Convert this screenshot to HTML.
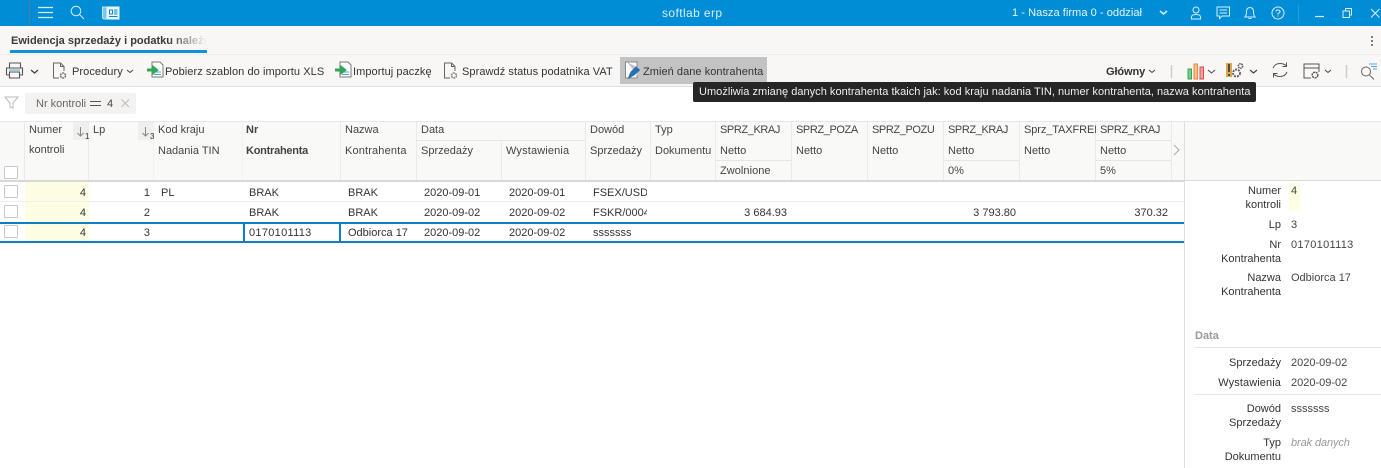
<!DOCTYPE html>
<html><head><meta charset="utf-8"><style>
html,body{margin:0;padding:0;width:1381px;height:468px;overflow:hidden;background:#fff}
body{font-family:"Liberation Sans",sans-serif;font-size:11px;color:#333;position:relative}
.a{position:absolute}
.t{position:absolute;white-space:nowrap;line-height:14px}
.r{text-align:right}
.h{color:#444}
.c{letter-spacing:-.4px}
.tb{letter-spacing:.07px;color:#333}
.v{position:absolute;width:1px;background:#eceae8}
.l{position:absolute;height:1px;background:#e6e5e3}
.cb{position:absolute;left:4px;width:12px;height:11px;border:1px solid #c9c9c9;background:#fff;border-radius:1px}
svg{position:absolute;overflow:visible}
.lab{position:absolute;left:1190px;width:91px;text-align:right;line-height:14px;color:#333}
.val{position:absolute;left:1291px;white-space:nowrap;line-height:14px;color:#444}
</style></head><body>
<!-- top bar -->
<div class="a" style="left:0;top:0;width:1381px;height:26px;background:#018dd5"></div>
<div class="a" style="left:29px;top:0;width:1px;height:26px;background:#4f7f99"></div>
<svg style="left:0;top:0" width="1381" height="26" fill="none" stroke="#d5eefa" stroke-width="1">
<path d="M38 7.5H53M38 12.5H53M38 17.5H53" stroke-width="1.2"/>
<circle cx="76" cy="11" r="4.8"/><path d="M79.5 14.5L84 19"/>
<path d="M102.500 7H119V19H104.500Q102.500 19 102.500 17Z" fill="#7cc4ea" stroke="#bfe4f6"/><path d="M107 7V19H119V7Z" fill="#eaf6fc" stroke="#eaf6fc"/><path d="M109.500 10H112.500V14H109.500ZM114 10H117.500M114 12H117.500M114 14H117.500M109 16.500H117.500" stroke="#018dd5"/>
<circle cx="1196" cy="10" r="3"/><path d="M1191.500 19V17Q1191.500 14.500 1196 14.500T1200.500 17V19Z"/>
<path d="M1217 7H1229.500V16H1222L1219.500 18.500V16H1217ZM1219.500 10H1227M1219.500 13H1227"/>
<path d="M1245 17Q1246.500 15.500 1246.500 12Q1246.500 7.500 1250 7.500T1253.500 12Q1253.500 15.500 1255 17ZM1248.500 18.500H1251.500"/>
<circle cx="1278" cy="13" r="6"/><path d="M1276 11.500Q1276 10 1278 10T1280 11.500Q1280 12.700 1278 13.500V14.500M1278 15.500V16.500"/>
<path d="M1298.500 5V21" stroke="#2a9fdb"/>
<path d="M1315 16.500H1324" stroke-width="1.200"/>
<path d="M1343 11H1349.500V17.500H1343ZM1345.500 11V8.500H1351.500V15H1349.500"/>
<path d="M1371 9L1379.500 17.500M1379.500 9L1371 17.500" stroke-width="1.100"/>
<path d="M1160 11L1163.500 14L1167 11" stroke-width="1.600"/>
</svg>
<div class="t" style="left:662px;top:6px;color:#d8f0fb;font-size:12px;letter-spacing:.4px">softlab erp</div>
<div class="t" style="left:1012px;top:6px;color:#e6f5fc;font-size:11.100px;letter-spacing:.02px">1 - Nasza firma 0 - oddział</div>
<!-- tab bar -->
<div class="a" style="left:0;top:26px;width:1381px;height:28px;background:#f8f7f5;border-bottom:1px solid #eeedeb"></div>
<div class="t" style="left:11px;top:34px;font-weight:bold;color:#3a3a3a;font-size:11px;width:196px;overflow:hidden;-webkit-mask-image:linear-gradient(90deg,#000 80%,transparent 100%)">Ewidencja sprzedaży i podatku należnego</div>
<div class="a" style="left:10px;top:50px;width:197px;height:3px;background:#0f93d8"></div>
<svg style="left:1370px;top:35px" width="4" height="12"><circle cx="2" cy="2" r="1" fill="#555"/><circle cx="2" cy="6" r="1" fill="#555"/><circle cx="2" cy="10" r="1" fill="#555"/></svg>
<!-- toolbar -->
<div class="a" style="left:0;top:55px;width:1381px;height:31px;background:#f8f7f5;border-bottom:1px solid #dfdedc"></div>
<div class="a" style="left:620px;top:57px;width:147px;height:27px;background:#c3c3c3"></div>
<svg style="left:0;top:55px" width="1381" height="31" fill="none" stroke="#555" stroke-width="1">
<path d="M9.500 13V8H20.500V13M6.500 20V13H22.500V20H19.500M9.500 20H6.500M9.500 17H19.500V23H9.500Z" stroke="#555" stroke-width="1.100"/><path d="M9 15H20" stroke="#4aa3d8"/>
<path d="M31 15L34.500 18L38 15" stroke="#444" stroke-width="1.300"/>
<path d="M59 23H53.500V8H60.500L64 11.500V16M60.500 8V11.500H64" stroke="#666"/><circle cx="63" cy="20.500" r="2.500" stroke="#777" stroke-width="1.500" stroke-dasharray="2 .6"/>
<path d="M127 15L130 17.500L133 15" stroke="#444"/>
<path d="M152 7H160L163 10V22H152Z" fill="#fff" stroke="#777"/><path d="M154 17H161M154 19.500H161" stroke="#4aa3d8"/><path d="M147 15H154" stroke="#2fa855" stroke-width="3"/><path d="M153 11L158 15L153 19Z" fill="#2fa855" stroke="#2fa855"/>
<path d="M340 7H348L351 10V22H340Z" fill="#fff" stroke="#777"/><path d="M342 17H349M342 19.500H349" stroke="#4aa3d8"/><path d="M335 15H342" stroke="#2fa855" stroke-width="3"/><path d="M341 11L346 15L341 19Z" fill="#2fa855" stroke="#2fa855"/>
<path d="M450 23H444.500V8H451.500L455 11.500V16M451.500 8V11.500H455" stroke="#666"/><circle cx="454" cy="20.500" r="2.500" stroke="#888" stroke-width="1.500" stroke-dasharray="2 .6"/>
<path d="M627 7H637V12M637 20V23H625.500V7H627" fill="#fff" stroke="#888"/><path d="M628.500 23L631 17L636 12L639.500 15L634 20Z" fill="#2a6fb5" stroke="#2a6fb5"/>
<path d="M1149 15L1152 17.500L1155 15" stroke="#444"/>
<path d="M1171.500 10V23" stroke="#ccc" stroke-width="1.500"/>
<rect x="1188" y="14" width="3.500" height="10" fill="#7fc79a" stroke="#2fa855"/><rect x="1194" y="9" width="3.500" height="15" fill="#f5c08e" stroke="#e8873a"/><rect x="1200" y="12" width="3.500" height="12" fill="#f2a5a5" stroke="#e04848"/>
<path d="M1208 15L1211.500 18L1215 15" stroke="#444"/>
<rect x="1226" y="8" width="6" height="14" fill="#d9a84e" stroke="none"/><path d="M1229 9V17M1229 19V21" stroke="#333" stroke-width="1.600"/>
<circle cx="1236.500" cy="18" r="3.500" stroke="#666" stroke-width="2" stroke-dasharray="2 1"/><circle cx="1240.500" cy="11" r="2.200" stroke="#555" stroke-width="1.500" stroke-dasharray="1.500 .7"/>
<path d="M1250 15L1253.500 18L1257 15" stroke="#444" stroke-width="1.200"/>
<path d="M1273 13Q1275 8.500 1280 8.500Q1284 8.500 1286.500 11M1286.500 7.500V11.500H1282.500M1287 17Q1285 21.500 1280 21.500Q1276 21.500 1273.500 19M1273.500 22.500V18.500H1277.500" stroke="#555"/>
<path d="M1311 23H1304V9H1319V17M1304 13H1319" stroke="#555"/><circle cx="1315" cy="20" r="2.800" stroke="#555" stroke-width="1.500" stroke-dasharray="2 .7"/>
<path d="M1325 15L1328 17.500L1331 15" stroke="#444"/>
<path d="M1346.500 10V23" stroke="#ccc" stroke-width="1.500"/>
<circle cx="1366" cy="16.500" r="4.500" stroke="#666"/><path d="M1369.500 20L1374 24.500" stroke="#666"/>
<path d="M1369 9H1377M1371 11.500H1377M1373 14H1377" stroke="#55a8e0"/>
</svg>
<div class="t tb" style="left:72px;top:65px">Procedury</div>
<div class="t tb" style="left:165px;top:65px">Pobierz szablon do importu XLS</div>
<div class="t tb" style="left:353px;top:65px">Importuj paczkę</div>
<div class="t tb" style="left:462px;top:65px">Sprawdź status podatnika VAT</div>
<div class="t tb" style="left:643px;top:65px;letter-spacing:.05px">Zmień dane kontrahenta</div>
<div class="t" style="left:1106px;top:65px;font-weight:bold;color:#333;letter-spacing:-.1px">Główny</div>
<!-- filter -->
<svg style="left:4px;top:96px" width="14" height="13" fill="none" stroke="#bbb"><path d="M1 1H14L9 7V12L6 11V7Z"/></svg>
<div class="a" style="left:25px;top:93px;width:111px;height:21px;background:#f3f2f0;border-radius:2px"></div>
<div class="t" style="left:36px;top:97px;color:#666">Nr kontroli</div>
<div class="a" style="left:90px;top:101px;width:11px;height:5px;border-top:1.500px solid #555;border-bottom:1.500px solid #555;box-sizing:border-box"></div>
<div class="t" style="left:107px;top:97px;font-weight:normal;color:#444">4</div>
<svg style="left:121px;top:99px" width="9" height="9" fill="none" stroke="#bbb"><path d="M.5.5L8 8M8 .5L.5 8"/></svg>
<!-- table header -->
<div class="a" style="left:0;top:121px;width:1381px;height:1px;background:#e8e7e5"></div>
<div class="a" style="left:0;top:122px;width:1381px;height:58px;background:#f9f9f7"></div>
<div class="a" style="left:0;top:180px;width:1184px;height:2px;background:#d9d8d6"></div>
<div class="a" style="left:1184px;top:180px;width:197px;height:1px;background:#d9d8d6"></div>
<div class="a" style="left:73px;top:122px;width:15px;height:18px;background:#f0efed"></div>
<div class="a" style="left:138px;top:122px;width:15px;height:18px;background:#f0efed"></div>
<div class="v" style="left:24px;top:122px;height:58px"></div>
<div class="v" style="left:88px;top:122px;height:58px"></div>
<div class="v" style="left:153px;top:122px;height:58px;background:#f3f2f0"></div>
<div class="v" style="left:242px;top:122px;height:58px;background:#f3f2f0"></div>
<div class="v" style="left:340px;top:122px;height:58px"></div>
<div class="v" style="left:416px;top:122px;height:58px"></div>
<div class="v" style="left:501px;top:140px;height:40px"></div>
<div class="v" style="left:585px;top:122px;height:58px"></div>
<div class="v" style="left:650px;top:122px;height:58px"></div>
<div class="v" style="left:715px;top:122px;height:58px"></div>
<div class="v" style="left:791px;top:122px;height:58px"></div>
<div class="v" style="left:867px;top:122px;height:58px"></div>
<div class="v" style="left:943px;top:122px;height:58px"></div>
<div class="v" style="left:1019px;top:122px;height:58px"></div>
<div class="v" style="left:1095px;top:122px;height:58px"></div>
<div class="v" style="left:1171px;top:122px;height:58px"></div>
<div class="v" style="left:1184px;top:122px;height:346px;background:#e0dfdd"></div>
<div class="l" style="left:416px;top:140px;width:169px"></div>
<div class="l" style="left:715px;top:160px;width:76px"></div>
<div class="l" style="left:943px;top:160px;width:76px"></div>
<div class="l" style="left:1095px;top:160px;width:76px"></div>
<div class="l" style="left:1095px;top:140px;width:76px"></div>
<svg style="left:0;top:122px" width="1190" height="40" fill="none" stroke="#888"><path d="M80.500 5V14M77.500 11L80.500 14L83.500 11M145.500 5V14M142.500 11L145.500 14L148.500 11"/><path d="M1174 23L1179 28L1174 33" stroke="#aaa"/></svg>
<div class="t" style="left:85px;top:132px;font-size:8px;line-height:10px">1</div>
<div class="t" style="left:150px;top:132px;font-size:8px;line-height:10px">3</div>
<div class="cb" style="top:166px"></div>
<div class="t h" style="left:29px;top:123px">Numer</div><div class="t h" style="left:29px;top:143px">kontroli</div>
<div class="t h" style="left:93px;top:123px">Lp</div>
<div class="t h" style="left:158px;top:123px">Kod kraju</div><div class="t h" style="left:158px;top:144px">Nadania TIN</div>
<div class="t h" style="left:246px;top:123px;font-weight:bold;color:#444">Nr</div><div class="t h" style="left:246px;top:144px;font-weight:bold;color:#444;letter-spacing:-.25px">Kontrahenta</div>
<div class="t h" style="left:345px;top:123px">Nazwa</div><div class="t h" style="left:345px;top:144px;letter-spacing:.15px">Kontrahenta</div>
<div class="t h" style="left:421px;top:123px">Data</div><div class="t h" style="left:421px;top:144px">Sprzedaży</div>
<div class="t h" style="left:506px;top:144px;letter-spacing:.15px">Wystawienia</div>
<div class="t h" style="left:590px;top:123px">Dowód</div><div class="t h" style="left:590px;top:144px">Sprzedaży</div>
<div class="t h" style="left:655px;top:123px">Typ</div><div class="t h" style="left:655px;top:144px">Dokumentu</div>
<div class="t h c" style="left:720px;top:123px">SPRZ_KRAJ</div><div class="t h" style="left:720px;top:144px">Netto</div><div class="t h" style="left:720px;top:164px;letter-spacing:.05px">Zwolnione</div>
<div class="t h c" style="left:796px;top:123px">SPRZ_POZA</div><div class="t h" style="left:796px;top:144px">Netto</div>
<div class="t h c" style="left:872px;top:123px">SPRZ_POZU</div><div class="t h" style="left:872px;top:144px">Netto</div>
<div class="t h c" style="left:948px;top:123px">SPRZ_KRAJ</div><div class="t h" style="left:948px;top:144px">Netto</div><div class="t h" style="left:948px;top:164px">0%</div>
<div class="t h c" style="left:1024px;top:123px;width:72px;overflow:hidden;letter-spacing:-.1px">Sprz_TAXFREE</div><div class="t h" style="left:1024px;top:144px">Netto</div>
<div class="t h c" style="left:1100px;top:123px">SPRZ_KRAJ</div><div class="t h" style="left:1100px;top:144px">Netto</div><div class="t h" style="left:1100px;top:164px">5%</div>
<!-- rows -->
<div class="a" style="left:25px;top:182px;width:64px;height:59px;background:#fdfde3"></div>
<div class="l" style="left:0;top:201px;width:1184px;background:#eeeeec"></div>
<div class="a" style="left:0;top:222px;width:1184px;height:2px;background:#0f7fc0"></div>
<div class="a" style="left:0;top:241px;width:1184px;height:2px;background:#0f7fc0"></div>
<div class="a" style="left:243px;top:224px;height:17px;background:#0f7fc0;width:2px"></div>
<div class="a" style="left:339px;top:224px;width:2px;height:17px;background:#0f7fc0"></div>
<div class="cb" style="top:185px"></div><div class="cb" style="top:205px"></div><div class="cb" style="top:225px"></div>
<div class="t r" style="left:50px;width:36px;top:186px">4</div><div class="t r" style="left:50px;width:36px;top:206px">4</div><div class="t r" style="left:50px;width:36px;top:226px">4</div>
<div class="t r" style="left:120px;width:30px;top:186px">1</div><div class="t r" style="left:120px;width:30px;top:206px">2</div><div class="t r" style="left:120px;width:30px;top:226px">3</div>
<div class="t" style="left:161px;top:186px">PL</div>
<div class="t" style="left:249px;top:186px">BRAK</div><div class="t" style="left:249px;top:206px">BRAK</div><div class="t" style="left:249px;top:226px;letter-spacing:.3px">0170101113</div>
<div class="t" style="left:348px;top:186px">BRAK</div><div class="t" style="left:348px;top:206px">BRAK</div><div class="t" style="left:348px;top:226px">Odbiorca 17</div>
<div class="t" style="left:424px;top:186px">2020-09-01</div><div class="t" style="left:424px;top:206px">2020-09-02</div><div class="t" style="left:424px;top:226px">2020-09-02</div>
<div class="t" style="left:509px;top:186px">2020-09-01</div><div class="t" style="left:509px;top:206px">2020-09-02</div><div class="t" style="left:509px;top:226px">2020-09-02</div>
<div class="t" style="left:593px;top:186px;width:54px;overflow:hidden">FSEX/USD/2020</div><div class="t" style="left:593px;top:206px;width:54px;overflow:hidden">FSKR/0004/2020</div><div class="t" style="left:593px;top:226px">sssssss</div>
<div class="t r" style="left:699px;width:88px;top:206px">3 684.93</div>
<div class="t r" style="left:928px;width:88px;top:206px">3 793.80</div>
<div class="t r" style="left:1080px;width:88px;top:206px">370.32</div>
<!-- right panel -->
<div class="a" style="left:1289px;top:183px;width:11px;height:28px;background:#fdfde3"></div>
<div class="lab" style="top:184px">Numer<br>kontroli</div><div class="val" style="top:184px">4</div>
<div class="lab" style="top:218px">Lp</div><div class="val" style="top:218px">3</div>
<div class="lab" style="top:238px">Nr<br>Kontrahenta</div><div class="val" style="top:238px;letter-spacing:.3px">0170101113</div>
<div class="lab" style="top:271px">Nazwa<br>Kontrahenta</div><div class="val" style="top:271px">Odbiorca 17</div>
<div class="t" style="left:1195px;top:329px;font-weight:bold;color:#9a9a9a">Data</div>
<div class="l" style="left:1195px;top:347px;width:186px"></div>
<div class="lab" style="top:356px">Sprzedaży</div><div class="val" style="top:356px">2020-09-02</div>
<div class="lab" style="top:376px;letter-spacing:.1px">Wystawienia</div><div class="val" style="top:376px">2020-09-02</div>
<div class="l" style="left:1195px;top:394px;width:186px"></div>
<div class="lab" style="top:402px">Dowód<br>Sprzedaży</div><div class="val" style="top:402px">sssssss</div>
<div class="lab" style="top:436px">Typ<br>Dokumentu</div><div class="val" style="top:436px;color:#999;font-style:italic;letter-spacing:-.1px">brak danych</div>
<!-- tooltip on top -->
<div class="a" style="left:693px;top:82px;width:563px;height:20px;background:#262626;border-radius:2px"></div>
<div class="t" style="left:699px;top:85px;color:#f0f0f0;font-size:11px;letter-spacing:.03px">Umożliwia zmianę danych kontrahenta tkaich jak: kod kraju nadania TIN, numer kontrahenta, nazwa kontrahenta</div>
</body></html>
